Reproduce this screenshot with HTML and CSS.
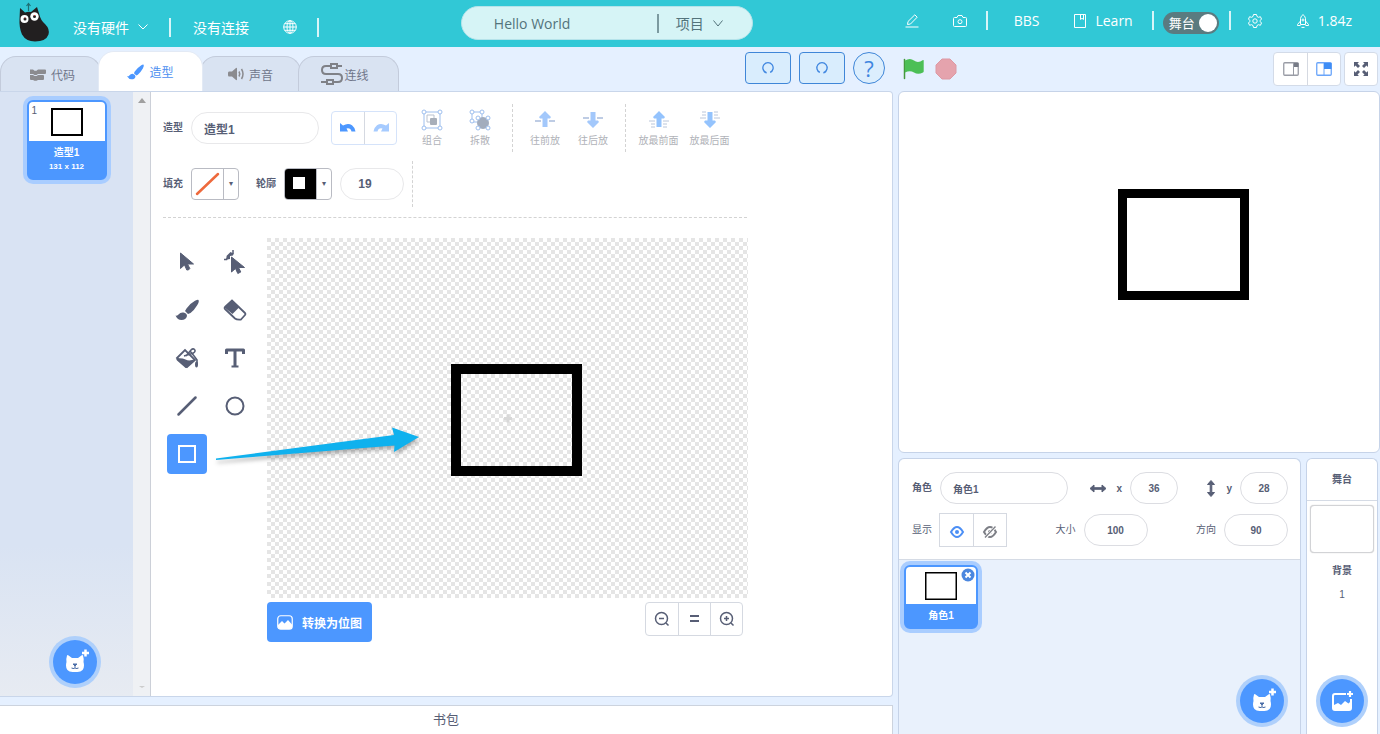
FILE: index.html
```html
<!DOCTYPE html>
<html lang="zh-CN">
<head>
<meta charset="utf-8">
<meta name="viewport" content="width=device-width, initial-scale=1">
<title>Hello World</title>
<link rel="stylesheet" href="styles.css">
</head>
<body>
<header class="topbar">
  <div class="topbar-left">
    <svg class="logo" width="32" height="40" viewBox="0 0 32 40" aria-label="Kitten">
      <path d="M10.500 9V2M8.500 4l2-2.500 2 2.500" stroke="#1d6f74" stroke-width="1.200" fill="none"/>
      <path d="M2 6l5 4.500q3-1 6-.5l6-5 2.500 8q1 5 5.500 9 5 5 3.500 10.500-2.500 7-13.500 7-9 0-13-7-3-7-2.500-15z" fill="#221f20"/>
      <circle cx="6.500" cy="17" r="4" fill="#fff"/><circle cx="16.500" cy="14.500" r="4.200" fill="#fff"/>
      <circle cx="7" cy="17" r="1.500" fill="#222"/><circle cx="16.500" cy="14.500" r="1.500" fill="#222"/>
      <path d="M6.500 16h1M16 13.500h1" stroke="#c33" stroke-width="1"/>
    </svg>
    <button class="top-btn hardware">没有硬件
      <svg width="10" height="6" viewBox="0 0 10 6"><path d="M.5.500L5 5 9.500.500" fill="none" stroke="currentColor"/></svg>
    </button>
    <span class="bar"></span>
    <button class="top-btn connection">没有连接</button>
    <button class="top-btn globe" aria-label="语言">
      <svg width="14" height="14" viewBox="0 0 14 14" fill="none" stroke="currentColor"><circle cx="7" cy="7" r="6.300"/><ellipse cx="7" cy="7" rx="3" ry="6.300"/><path d="M7 .700v12.600M.7 7h12.600M1.700 3.700h10.600M1.700 10.300h10.600"/></svg>
    </button>
    <span class="bar"></span>
  </div>
  <div class="project">
    <input class="project-name" value="Hello World" aria-label="项目名称">
    <span class="project-bar"></span>
    <button class="project-menu">项目
      <svg width="10" height="7" viewBox="0 0 10 7"><path d="M.5.500L5 6 9.500.500" fill="none" stroke="currentColor"/></svg>
    </button>
  </div>
  <div class="topbar-right">
    <button class="top-btn edit" aria-label="编辑">
      <svg width="14" height="14" viewBox="0 0 14 14" fill="none" stroke="currentColor"><path d="M.5 13h13M2.500 10.500l.5-3L9.800.800l2.400 2.400L5.500 10z"/></svg>
    </button>
    <button class="top-btn camera" aria-label="截图">
      <svg width="14" height="12" viewBox="0 0 14 12" fill="none" stroke="currentColor"><path d="M1.500 2.500H4L5 .5h4l1 2h2.500q1 0 1 1v7q0 1-1 1h-11q-1 0-1-1v-7q0-1 1-1z"/><circle cx="7" cy="6.700" r="2"/></svg>
    </button>
    <span class="bar"></span>
    <a class="top-link bbs" href="#">BBS</a>
    <a class="top-link learn" href="#">
      <svg width="12" height="14" viewBox="0 0 12 14" fill="none" stroke="currentColor"><path d="M.5.500h11v13H.5zM6.500.500v5l1.500-1.200 1.500 1.200v-5"/></svg>
      Learn</a>
    <span class="bar"></span>
    <label class="stage-switch">舞台<input type="checkbox" role="switch" checked></label>
    <span class="bar"></span>
    <button class="top-btn gear" aria-label="设置">
      <svg width="14" height="14" viewBox="0 0 14 14" fill="none" stroke="currentColor"><path d="M5.500.500h3l.5 2 1.500.800 1.900-.6 1.100 2.300-1.300 1.500v1l1.300 1.500-1.100 2.300-1.900-.6-1.500.800-.5 2h-3l-.5-2-1.500-.8-1.900.6L.5 9l1.300-1.500v-1L.5 5l1.100-2.300 1.900.6L5 2.500z"/><circle cx="7" cy="7" r="2.200"/></svg>
    </button>
    <a class="top-link version" href="#">
      <svg width="12" height="14" viewBox="0 0 12 14" fill="none" stroke="currentColor"><path d="M3.500 10.500V4.500Q4 1.800 6 .6q2 1.200 2.500 3.900v6zM3.500 7l-3 3.500v1h3M8.500 7l3 3.500v1h-3M4.500 13.400h3"/><circle cx="6" cy="6" r="1"/></svg>
      1.84z</a>
  </div>
</header>

<main class="layout">
  <section class="left">
    <div class="tabs-row">
      <div class="tabs" role="tablist">
        <button class="tab" role="tab">
          <svg width="16" height="13" viewBox="0 0 16 13" fill="#8b8b8f"><path d="M0 1.500h3l1.500 1.200h2L8 1.500h7q1 0 1 1v2.500q0 1-1 1H8L6.500 7h-2L3 6H0zM0 7h3l1.500 1h2L8 7h5q1 0 1 1v3q0 1-1 1H8l-1.500.800h-2L3 12H1q-1 0-1-1z"/></svg>代码</button>
        <button class="tab tab-active" role="tab" aria-selected="true">
          <svg width="17" height="16" viewBox="0 0 22 20" fill="#4c97ff"><path d="M21.500.500q1 1-1 5Q18 10 14 13.500l-2 1-3-3 1-2Q14 4 18.500 1.200q2-1.200 3-.7zM8 12.500q3 1 3 3.500-1 3.500-5 3.500-3.500 0-6-4 2 .5 3-1 2-2.500 5-2z"/></svg>造型</button>
        <button class="tab" role="tab">
          <svg width="16" height="14" viewBox="0 0 16 14" fill="#8b8b8f"><path d="M1 4.500h3L8 1q1-.5 1 .7v10.600q0 1.200-1 .7L4 9.500H1Q0 9.500 0 8V6q0-1.500 1-1.500z"/><path d="M11 4.500q1.500 2.500 0 5M13.500 2q3 5 0 10" fill="none" stroke="#8b8b8f" stroke-width="1.500"/></svg>声音</button>
        <button class="tab tab-wire" role="tab">
          <svg width="24" height="22" viewBox="0 0 24 22" fill="none" stroke="#7f8187" stroke-width="2"><path d="M17 3h5M11 3H6q-4 0-4 4t4 4h12q4 0 4 4t-4 4h-5M7 19H1"/><rect x="11" y="1" width="6" height="4"/><rect x="7" y="17" width="6" height="4"/></svg>连线</button>
      </div>
      <div class="history">
        <button class="pill-btn" aria-label="撤销"><svg width="12" height="12" viewBox="0 0 14 14"><path d="M4.500 12.200a6 6 0 1 1 5 0" fill="none" stroke="currentColor" stroke-width="1.500"/><path d="M2 12.500l3.500-1v2z" fill="currentColor"/></svg></button>
        <button class="pill-btn" aria-label="重做"><svg width="12" height="12" viewBox="0 0 14 14"><path d="M4.500 12.200a6 6 0 1 1 5 0" fill="none" stroke="currentColor" stroke-width="1.500"/><path d="M12 12.500l-3.500-1v2z" fill="currentColor"/></svg></button>
        <button class="help-btn" aria-label="帮助">?</button>
      </div>
    </div>

    <div class="editor">
      <aside class="costumes">
        <div class="costume-list">
          <button class="thumb costume">
            <span class="costume-no">1</span>
            <span class="thumb-view"><svg width="32" height="28" viewBox="0 0 32 28"><rect x="1" y="1" width="30" height="26" fill="#fff" stroke="#000" stroke-width="2"/></svg></span>
            <span class="thumb-name">造型1</span>
            <span class="thumb-size">131 x 112</span>
          </button>
          <button class="round-btn" aria-label="添加造型">
            <svg width="24" height="24" viewBox="0 0 24 24"><use href="#cat-plus"/></svg>
          </button>
        </div>
        <div class="scrollbar"><svg width="8" height="5" viewBox="0 0 8 5"><path d="M0 5l4-5 4 5z" fill="#a0a0a0"/></svg><svg width="6" height="2" viewBox="0 0 6 2"><path d="M0 0h6L3 2z" fill="#ccc"/></svg></div>
      </aside>

      <div class="paint">
        <div class="paint-head">
          <div class="paint-row">
            <label class="lbl" for="costume-name">造型</label>
            <input class="field field-name" id="costume-name" value="造型1">
            <div class="undo-group">
              <button aria-label="撤销"><svg width="16" height="10" viewBox="0 0 16 10"><path d="M0 0l3 2.500Q8-.5 12 2.200 15 4.500 15.500 8.500h-4Q10.500 4.500 6.500 5.500L8 8.500H0z" fill="#4c97ff"/></svg></button>
              <button aria-label="重做"><svg width="16" height="10" viewBox="0 0 16 10"><path d="M16 0l-3 2.500Q8-.5 4 2.200 1 4.500.5 8.500h4Q5.500 4.500 9.500 5.500L8 8.500h8z" fill="#a6cbff"/></svg></button>
            </div>
            <div class="actions">
              <button class="action"><svg width="22" height="22" viewBox="0 0 22 22"><path d="M3 3h16v16H3z" fill="none" stroke="#9ebfee"/><path d="M6 6h7v7H6z" fill="#fff" stroke="#b9c2d0"/><rect x="9" y="9" width="7" height="7" rx="1" fill="#a8afba"/><g fill="#fff" stroke="#9ebfee"><circle cx="3" cy="3" r="2"/><circle cx="19" cy="3" r="2"/><circle cx="3" cy="19" r="2"/><circle cx="19" cy="19" r="2"/></g></svg>组合</button>
              <button class="action"><svg width="22" height="22" viewBox="0 0 22 22"><path d="M3 3h10v10H3z" fill="none" stroke="#9ebfee"/><circle cx="14" cy="14" r="6" fill="#a3adbd"/><g fill="#fff" stroke="#9ebfee"><circle cx="3" cy="3" r="2"/><circle cx="13" cy="3" r="2"/><circle cx="3" cy="12" r="2"/><circle cx="9" cy="9" r="2"/><circle cx="19" cy="9" r="2"/><circle cx="9" cy="19" r="2"/><circle cx="19" cy="19" r="2"/></g></svg>拆散</button>
            </div>
            <div class="actions">
              <button class="action"><svg width="22" height="22" viewBox="0 0 22 22"><path d="M1 12h6M15 12h6" stroke="#a9bcdc" stroke-width="1.500"/><path d="M11 2l6 6-1 1.500h-2.500V18h-5V9.500H6L5 8z" fill="#a3c8fb"/></svg>往前放</button>
              <button class="action"><svg width="22" height="22" viewBox="0 0 22 22"><path d="M1 9h6M15 9h6" stroke="#a9bcdc" stroke-width="1.500"/><path d="M11 19l6-6-1-1.500h-2.500V3h-5v8.500H6L5 13z" fill="#a3c8fb"/></svg>往后放</button>
            </div>
            <div class="actions actions-last">
              <button class="action"><svg width="22" height="22" viewBox="0 0 22 22"><path d="M1 12h6M15 12h6M3 15h4M15 15h4M3 18h4M15 18h4" stroke="#bac6da"/><path d="M11 2l6 6-1 1.500h-2.500V18h-5V9.500H6L5 8z" fill="#94c3fd"/></svg>放最前面</button>
              <button class="action"><svg width="22" height="22" viewBox="0 0 22 22"><path d="M1 9h6M15 9h6M3 6h4M15 6h4M3 3h4M15 3h4" stroke="#bac6da"/><path d="M11 19l6-6-1-1.500h-2.500V3h-5v8.500H6L5 13z" fill="#94c3fd"/></svg>放最后面</button>
            </div>
          </div>
          <div class="paint-row paint-row-2">
            <span class="lbl">填充</span>
            <button class="swatch" aria-label="填充"><svg width="31" height="30" viewBox="0 0 31 30"><path d="M5 25L26 5" stroke="#ee6a3d" stroke-width="2.500" stroke-linecap="round"/></svg><span class="caret">▾</span></button>
            <span class="lbl lbl-outline">轮廓</span>
            <button class="swatch" aria-label="轮廓"><svg width="31" height="30" viewBox="0 0 31 30"><path d="M-1-1h32v32H-1z"/><path d="M8 8h12v12H8z" fill="#fff"/></svg><span class="caret">▾</span></button>
            <input class="field field-width" value="19" aria-label="轮廓宽度">
            <span class="dash"></span>
          </div>
        </div>
        <div class="paint-body">
          <div class="tools">
            <button class="tool" aria-label="选择"><svg width="24" height="24" viewBox="0 0 24 24"><use href="#pointer"/></svg></button>
            <button class="tool" aria-label="变形"><svg width="24" height="24" viewBox="0 0 24 24"><path d="M8.500 7v15l4-3.500 2.300 5 3-1.500-2.300-4.500h6z" fill="#575e75" stroke="#575e75" stroke-linejoin="round"/><path d="M1 9.500h2.500q1-5 6.500-6V0" fill="none" stroke="#575e75" stroke-width="1.500"/><path d="M3.500 6l4-4 3 1.500-.5 2-3 .5v3l-3 .5z" fill="#575e75"/></svg></button>
            <button class="tool" aria-label="画笔"><svg width="24" height="24" viewBox="0 0 24 24" fill="#575e75"><path d="M23.500 2q1 1.500-1.500 5.500-3 5-6.500 7.500l-2.500 1-3-3 1.500-2.500Q15 5.500 20 2.800q3-1.500 3.500-.8zM8.500 14.500q3.500.800 3.500 3.500-1 4-5.500 4-4 0-6-4.500 2 .5 3-1 2-2.500 5-2z"/></svg></button>
            <button class="tool" aria-label="橡皮擦"><svg width="24" height="24" viewBox="0 0 24 24"><path d="M2 9l7-6.500L22 15q1 1 0 2l-4 4.500q-4 .500-6-1L2 11q-1-1 0-2z" fill="#fff" stroke="#575e75" stroke-width="1.800"/><path d="M1.500 9.500L9 2l7.500 7-7 7z" fill="#575e75"/></svg></button>
            <button class="tool" aria-label="填充"><svg width="24" height="24" viewBox="0 0 24 24"><path d="M2 12l8-8 10 10-8 7z" fill="none" stroke="#575e75" stroke-width="1.800"/><path d="M1.500 12.500q5-1 9 1t9.500-.5l-8 8.500q-1 1-2 0l-8-7q-1-1-.5-2z" fill="#575e75"/><path d="M11 10l5-6q2-2 3.500-.5t-1 3.500L9 10M15 5q5 6 7 9v5.500" fill="none" stroke="#575e75" stroke-width="1.600"/><ellipse cx="21.500" cy="18.500" rx="1.500" ry="3" fill="#575e75"/></svg></button>
            <button class="tool" aria-label="文本"><svg width="24" height="24" viewBox="0 0 24 24" fill="none" stroke="#575e75" stroke-width="3"><path d="M3.500 8V4h17v4M12 4v17" stroke-linejoin="round"/><path d="M8.500 20.500h7" stroke-width="2"/></svg></button>
            <button class="tool" aria-label="线段"><svg width="24" height="24" viewBox="0 0 24 24"><path d="M3.500 20.500L20.500 3.500" stroke="#575e75" stroke-width="2.500" stroke-linecap="round"/></svg></button>
            <button class="tool" aria-label="圆"><svg width="24" height="24" viewBox="0 0 24 24"><circle cx="12" cy="12" r="8.500" fill="none" stroke="#575e75" stroke-width="2"/></svg></button>
            <button class="tool tool-active" aria-label="矩形"><svg width="24" height="24" viewBox="0 0 24 24"><rect x="4" y="4" width="16" height="16" fill="none" stroke="#fff" stroke-width="2"/></svg></button>
          </div>
          <div class="canvas-col">
            <svg class="canvas" width="481" height="360" viewBox="0 0 481 360">
              <defs><pattern id="checks" width="8" height="8" patternUnits="userSpaceOnUse"><path d="M0 0h8v8H0z" fill="#fff"/><path d="M0 0h4v4H0zM4 4h4v4H4z" fill="#e5e5e5"/></pattern></defs>
              <path d="M0 0h481v360H0z" fill="url(#checks)"/>
              <path d="M237 180.500h8M241 176.500v8" stroke="#d8d8d8" stroke-width="3"/>
              <rect x="189" y="131" width="121" height="102" fill="none" stroke="#000" stroke-width="10"/>
            </svg>
            <div class="canvas-foot">
              <button class="convert"><svg width="16" height="15" viewBox="0 0 16 15"><rect x=".75" y=".75" width="14.500" height="13.500" rx="3" fill="none" stroke="#fff" stroke-width="1.200"/><path d="M1 10l4-4 2.500 2.500L11 5l4 4.500V12q0 2-2 2H3q-2 0-2-2z" fill="#fff"/></svg>转换为位图</button>
              <div class="zoom">
                <button aria-label="缩小"><svg width="16" height="16" viewBox="0 0 16 16" fill="none" stroke="#575e75" stroke-width="1.500"><circle cx="7.500" cy="7.500" r="6"/><path d="M12 12l2.500 2.500M5 7.500h5"/></svg></button>
                <button aria-label="还原"><svg width="16" height="16" viewBox="0 0 16 16" fill="none" stroke="#575e75" stroke-width="2"><path d="M3 5h9M3 10h9"/></svg></button>
                <button aria-label="放大"><svg width="16" height="16" viewBox="0 0 16 16" fill="none" stroke="#575e75" stroke-width="1.500"><circle cx="7.500" cy="7.500" r="6"/><path d="M12 12l2.500 2.500M5 7.500h5M7.500 5v5"/></svg></button>
              </div>
            </div>
          </div>
          <svg class="arrow" width="212" height="42" viewBox="0 0 212 42"><path d="M-1 32.500L177 9l-2-7.500 27 9.500-25 15 .5-6.500L-1 34z" fill="#0fb1ee"/></svg>
        </div>
      </div>
    </div>
    <button class="backpack">书包</button>
  </section>

  <section class="right">
    <div class="stage-bar">
      <button class="plain" aria-label="运行"><svg width="22" height="22" viewBox="0 0 22 22"><path d="M1.500 1.500v19" stroke="#45993d" stroke-width="1.500" stroke-linecap="round"/><path d="M2 2.500q5-3 9 0t9-.5q.7-.3.700.5v11q0 .700-.7 1-5 2.500-9 0t-9 0z" fill="#4cbf56"/></svg></button>
      <button class="plain" aria-label="停止"><svg width="22" height="22" viewBox="0 0 22 22"><path d="M7 1h8l6 6v8l-6 6H7l-6-6V7z" fill="#e5a3ad" stroke="#dd99a4"/></svg></button>
      <div class="size-group">
        <button aria-label="小舞台"><svg width="16" height="14" viewBox="0 0 16 14"><rect x=".75" y=".75" width="14.500" height="12.500" rx="1" fill="#fff" stroke="#999ca5" stroke-width="1.300"/><path d="M10.500 1v12" stroke="#999ca5"/><path d="M11 1h4.500v4H11z" fill="#777b86"/></svg></button>
        <button aria-label="大舞台"><svg width="16" height="14" viewBox="0 0 16 14"><rect x=".75" y=".75" width="14.500" height="12.500" rx="1" fill="#fff" stroke="#6aa5fa" stroke-width="1.300"/><path d="M8 1v12" stroke="#6aa5fa"/><path d="M8 1h7.500v6H8z" fill="#3f8df5"/></svg></button>
      </div>
      <div class="size-group size-full">
        <button aria-label="全屏"><svg width="16" height="16" viewBox="0 0 16 16" fill="#575e75"><path d="M1 1h5L4.500 2.500l2.500 2.500-2 2-2.500-2.500L1 6zM15 1h-5l1.500 1.500L9 5l2 2 2.500-2.500L15 6zM1 15h5l-1.500-1.500L7 11 5 9l-2.500 2.500L1 10zM15 15h-5l1.500-1.500L9 11l2-2 2.500 2.500L15 10z"/></svg></button>
      </div>
    </div>
    <svg class="stage" viewBox="0 0 480 360"><rect x="223.500" y="101.500" width="122" height="102" fill="#fff" stroke="#000" stroke-width="9"/></svg>
    <div class="targets">
      <div class="sprites">
        <div class="sprite-info">
          <div class="info-row">
            <label class="lbl" for="sprite-name">角色</label>
            <input class="field field-sprite" id="sprite-name" value="角色1">
            <label class="axis" for="pos-x"><svg width="18" height="12" viewBox="0 0 18 12"><path d="M1 6.500l4-3.500v2.700h8V3l4 3.500-4 3.500V7.300H5V10z" fill="#575e75" stroke="#575e75" stroke-linejoin="round"/></svg>x</label>
            <input class="field field-num" id="pos-x" value="36">
            <label class="axis" for="pos-y"><svg width="12" height="18" viewBox="0 0 12 18"><path d="M6 1.500l3.500 4H6.800v8h2.700l-3.500 4-3.500-4h2.700v-8H2.500z" fill="#575e75" stroke="#575e75" stroke-linejoin="round"/></svg>y</label>
            <input class="field field-num" id="pos-y" value="28">
          </div>
          <div class="info-row">
            <span class="lbl light">显示</span>
            <div class="eye-group">
              <button aria-label="显示"><svg width="14" height="12" viewBox="0 0 14 12"><path d="M1 6q6-10 12 0-6 10-12 0z" fill="#fff" stroke="#4c8ff5" stroke-width="2"/><circle cx="7" cy="6" r="2" fill="#4c8ff5"/></svg></button>
              <button aria-label="隐藏"><svg width="14" height="12" viewBox="0 0 14 12"><path d="M1 6q6-10 12 0-6 10-12 0z" fill="#fff" stroke="#7d7f86" stroke-width="2"/><circle cx="7" cy="6" r="2" fill="#7d7f86"/><path d="M2 12L13 0" stroke="#fff" stroke-width="3"/><path d="M2 11.500L12.500.500" stroke="#7d7f86" stroke-width="1.300"/></svg></button>
            </div>
            <label class="lbl light push" for="size">大小</label>
            <input class="field field-mid" id="size" value="100">
            <label class="lbl light push" for="dir">方向</label>
            <input class="field field-mid" id="dir" value="90">
          </div>
        </div>
        <div class="sprite-list">
          <button class="thumb sprite">
            <span class="thumb-view"><svg width="32" height="28" viewBox="0 0 32 28"><rect x=".75" y=".75" width="30.500" height="26.500" fill="#fff" stroke="#000" stroke-width="1.500"/></svg></span>
            <span class="thumb-name">角色1</span>
            <svg class="delete" width="14" height="14" viewBox="0 0 14 14"><circle cx="7" cy="7" r="6.500" fill="#4b87df"/><path d="M4.500 4.500l5 5M9.500 4.500l-5 5" stroke="#fff" stroke-width="2"/></svg>
          </button>
          <button class="round-btn" aria-label="添加角色"><svg width="24" height="24" viewBox="0 0 24 24"><use href="#cat-plus"/></svg></button>
        </div>
      </div>
      <div class="backdrop">
        <div class="backdrop-title">舞台</div>
        <button class="backdrop-view" aria-label="舞台背景"></button>
        <span class="backdrop-label">背景</span>
        <span class="backdrop-count">1</span>
        <button class="round-btn" aria-label="添加背景"><svg width="24" height="24" viewBox="0 0 24 24"><path d="M16 4H5Q2 4 2 7v12q0 3 3 3h14q3 0 3-3V10h-2v3l-1.500 1.500L15 12l-4 4-3-2-4 2V7q0-1 1-1h11z" fill="#fff"/><path d="M20 2v6M17 5h6" stroke="#fff" stroke-width="2.200"/></svg></button>
      </div>
    </div>
  </section>
</main>

<svg class="defs" width="0" height="0" aria-hidden="true">
  <defs>
    <g id="pointer"><path d="M5.500 3v15.500l4-3.600 2.300 5.100q2 .500 3-1.500l-2.300-4.500h6z" fill="#575e75" stroke="#575e75" stroke-linejoin="round"/></g>
    <g id="cat-plus"><path d="M4 5.500q.5-.7 1.200-.2L9 8h6l3.800-2.700q.7-.5 1.200.2 1 3 .5 6.500.500 1.500.5 3.500 0 6.500-6.500 6.500h-5Q3 22 3 15.500q0-2 .5-3.500Q3 8.500 4 5.500z" fill="#fff"/><path d="M10 14h4l-2 2zM12 16v1.500M8.500 18q3.500 1.500 3.500-.5 0 2 3.500.5" fill="#4c6fa8" stroke="#4c6fa8" stroke-linejoin="round"/><path d="M22.500-.5v7M19 3h7" stroke="#fff" stroke-width="2.500"/></g>
  </defs>
</svg>
</body>
</html>
```
FILE: styles.css
```css
* { box-sizing: border-box; }
body {
  margin: 0;
  height: 100vh;
  display: flex;
  flex-direction: column;
  overflow: hidden;
  background: #e5f0ff;
  color: #575e75;
  font-family: "Liberation Sans", "Noto Sans CJK SC", sans-serif;
  font-size: 10px;
}
button, input { font: inherit; color: inherit; }
button {
  display: flex;
  align-items: center;
  justify-content: center;
  padding: 0;
  border: 0;
  background: none;
}
svg { flex: none; overflow: visible; }
.defs { position: absolute; }

/* Top bar */
.topbar {
  flex: none;
  height: 47px;
  display: flex;
  justify-content: space-between;
  align-items: flex-start;
  padding: 0 28px 0 18px;
  background: #31c8d6;
  color: #fff;
  font-family: "Open Sans", "Noto Sans CJK SC", sans-serif;
  font-size: 14px;
}
.topbar-left, .topbar-right { display: flex; align-items: center; }
.topbar-left { height: 46px; padding-top: 8px; }
.topbar-right { height: 41px; }
.logo { margin: -11px 23px 0 0; }
.bar { width: 2px; height: 19px; background: #d8f5f8; }
.top-btn { font-size: 14px; gap: 9px; }
.hardware { margin-right: 21px; }
.connection { margin: 0 34px 0 22px; }
.globe { margin-right: 20px; }
.project {
  flex: 0 1 291px;
  height: 34px;
  margin: 6px 10px 0 0;
  padding-left: 32px;
  display: flex;
  align-items: center;
  border-radius: 17px;
  border: 1px solid #b5e3ea;
  background: #d6f4f6;
  color: #53737b;
}
.project-name { flex: 1; min-width: 0; border: 0; padding: 0; background: none; }
.project-bar { width: 2px; height: 19px; background: #7c9aa0; }
.project-menu { margin: 0 29px 0 17px; gap: 9px; }
.camera { margin: 0 19px 0 34px; }
.top-link { display: flex; align-items: center; gap: 9px; color: #fff; text-decoration: none; }
.bbs { margin: 0 35px 0 26px; }
.learn { margin-right: 19px; }
.stage-switch {
  display: flex;
  align-items: center;
  justify-content: space-between;
  width: 56px;
  height: 22px;
  margin: 4px 10px 0 9px;
  padding: 0 2px 0 6px;
  border-radius: 11px;
  background: #5a7b80;
  font-size: 13px;
}
.stage-switch input { appearance: none; margin: 0; width: 18px; height: 18px; border-radius: 50%; background: #fff; }
.gear { margin: 0 35px 0 17px; }

/* Columns */
.layout { flex: 1; min-height: 0; display: flex; gap: 5px; }
.left { flex: 1; min-width: 0; display: flex; flex-direction: column; }
.right { flex: none; width: 482px; display: flex; flex-direction: column; }

/* Tabs */
.tabs-row { flex: none; height: 44px; display: flex; justify-content: space-between; align-items: flex-end; }
.tabs { display: flex; align-items: flex-end; }
.tab {
  width: 101px;
  height: 35px;
  margin-right: -3px;
  gap: 5px;
  border: 1px solid #c3cbdb;
  border-bottom: 0;
  border-radius: 16px 16px 0 0;
  background: #d9e3f2;
  color: #70768a;
  font-size: 12px;
}
.tab:first-child { padding-left: 4px; }
.tab-active { position: relative; width: 105px; height: 40px; background: #fff; color: #4c8ff0; border-color: #e3eaf5; }
.tab-wire { gap: 0; padding-right: 8px; }
.history { display: flex; gap: 8px; padding: 0 8px 7px 0; color: #3f86e0; }
.pill-btn { width: 46px; height: 32px; border: 1px solid #3f86d8; border-radius: 4px; background: #d9edfd; }
.help-btn { width: 32px; height: 32px; border: 1px solid #3f86d8; border-radius: 50%; background: #dceefd; font: 22px "Open Sans", sans-serif; }

/* Editor */
.editor {
  flex: 1;
  min-height: 0;
  display: flex;
  border: 1px solid #c9d6ea;
  border-left: 0;
  border-radius: 0 4px 4px 0;
  background: #fff;
}
.costumes { flex: none; width: 151px; display: flex; border-right: 1px solid #ccd0d8; background: #eff1f4; }
.costume-list {
  width: 133px;
  padding: 8px 0;
  display: flex;
  flex-direction: column;
  align-items: center;
  justify-content: space-between;
  background: linear-gradient(#d9e3f3 75%, #e7ebf2);
}
.costume-list .round-btn { margin-left: 20px; }
.scrollbar { width: 17px; padding: 6px 0 8px; display: flex; flex-direction: column; align-items: center; justify-content: space-between; }
.thumb {
  position: relative;
  flex-direction: column;
  justify-content: flex-start;
  overflow: visible;
  border: 2px solid #4c97ff;
  border-radius: 6px;
  background: #4c97ff;
  box-shadow: 0 0 0 4px #a9cdff;
  color: #fff;
  font-weight: bold;
}
.costume { width: 80px; height: 80px; }
.thumb-view { width: 100%; height: 39px; display: flex; align-items: center; justify-content: center; background: #fff; border-radius: 4px 4px 0 0; }
.thumb-name { line-height: 14px; margin-top: 5px; font-size: 10px; }
.thumb-size { line-height: 14px; font-size: 8px; }
.costume-no { position: absolute; top: 3px; left: 3px; color: #575e75; font-weight: normal; }
.round-btn { flex: none; width: 44px; height: 44px; margin: 4px; border-radius: 50%; background: #4c97ff; box-shadow: 0 0 0 4px #afd0fb; }

.paint { flex: 1; min-width: 0; padding: 12px 12px 0; }
.paint-head { width: 584px; height: 114px; border-bottom: 1px dashed #d3d3d3; }
.paint-row { height: 48px; display: flex; align-items: center; }
.paint-row > * { flex: none; }
.paint-row-2 { margin-top: 8px; }
.lbl { width: 28px; font-weight: bold; line-height: 16px; white-space: nowrap; }
.light { font-weight: normal; }
.lbl-outline { margin-left: 17px; }
.field {
  height: 32px;
  min-width: 0;
  padding: 0;
  border: 1px solid #dcdde2;
  border-radius: 16px;
  background: #fff;
  font-weight: bold;
  text-align: center;
}
.paint .field { font-size: 12px; border-color: #e8e8ea; }
.field-name { width: 128px; margin-right: 12px; }
.paint .field-name, .field-sprite { padding-left: 12px; text-align: left; }
.undo-group, .size-group, .eye-group, .zoom { display: flex; border: 1px solid #d5d9e1; border-radius: 4px; background: #fff; }
.undo-group button, .size-group button, .eye-group button, .zoom button { width: 33px; height: 32px; }
.undo-group button + button, .size-group button + button, .eye-group button + button, .zoom button + button { border-left: 1px solid #d5d9e1; }
.undo-group { border-color: #d5e3fa; margin-right: 3px; }
.undo-group button { width: 32px; }
.actions { height: 48px; padding: 0 8px; display: flex; align-items: center; border-right: 1px dashed #d3d3d3; }
.actions-last { border: 0; padding: 0 7px; }
.action { flex-direction: column; width: 48px; gap: 3px; color: #b0b2b8; line-height: 14px; white-space: nowrap; }
.actions-last .action { width: 51px; }
.swatch { width: 48px; height: 32px; overflow: hidden; border: 1px solid #b9bbc3; border-radius: 4px; }
.caret { flex: 1; align-self: stretch; line-height: 30px; border-left: 1px solid #b9bbc3; font-family: "DejaVu Sans", sans-serif; font-size: 8px; }
.field-width { width: 64px; margin: 0 8px; padding-right: 14px; }
.dash { height: 46px; border-left: 1px dashed #d3d3d3; }

.paint-body { position: relative; display: flex; gap: 12px; padding: 20px 0 0 4px; }
.tools { display: grid; grid-template-columns: 40px 40px; gap: 8px; align-content: start; padding-top: 4px; }
.tool { width: 40px; height: 40px; border-radius: 4px; }
.tool-active { background: #4c97ff; }
.canvas { display: block; }
.canvas-foot { display: flex; justify-content: space-between; align-items: flex-start; padding: 4px 5px 0 0; }
.convert { width: 105px; height: 40px; gap: 9px; border-radius: 4px; background: #4c97ff; color: #fff; font-size: 12px; font-weight: bold; white-space: nowrap; }
.zoom button { width: 32px; }
.arrow { position: absolute; left: 54px; top: 208px; filter: drop-shadow(1px 3px 2px rgba(0, 0, 0, .3)); }

.backpack {
  flex: none;
  height: 29px;
  margin-top: 8px;
  padding-bottom: 4px;
  border: 1px solid #ccd3de;
  border-width: 1px 1px 0 0;
  background: #fff;
  font-size: 13px;
}

/* Stage */
.stage-bar { flex: none; height: 44px; display: flex; align-items: center; padding: 0 2px 0 5px; }
.plain { margin-right: 10px; }
.size-group { margin-left: auto; border-color: #d3dbe8; }
.size-full { margin-left: 3px; }
.size-full button { width: 32px; }
.stage { flex: none; display: block; width: 100%; height: auto; border: 1px solid #c6d3e8; border-radius: 6px; background: #fff; }
.targets { flex: 1; min-height: 0; margin-top: 5px; display: flex; gap: 5px; padding-right: 2px; }
.sprites { flex: 1; min-width: 0; display: flex; flex-direction: column; border: 1px solid #c6d3e8; border-bottom: 0; border-radius: 6px 6px 0 0; background: #e9f1fc; }
.sprite-info { display: flex; flex-direction: column; gap: 8px; height: 101px; padding: 12px 12px 0 13px; border-bottom: 1px solid #d5dbe5; border-radius: 6px 6px 0 0; background: #fff; }
.info-row { height: 34px; display: flex; align-items: center; }
.field-sprite { width: 128px; }
.field-num { width: 48px; }
.field-mid { width: 64px; }
.axis { flex: 1; display: flex; align-items: center; justify-content: flex-end; gap: 9px; padding-right: 8px; font-weight: bold; }
.eye-group { border-radius: 0; margin-left: -1px; }
.eye-group button { padding-top: 4px; }
.push { margin-left: auto; }
.sprite-list { flex: 1; display: flex; justify-content: space-between; align-items: flex-start; padding: 5px 12px 2px 5px; }
.sprite { width: 74px; height: 64px; }
.sprite .thumb-view { height: 37px; }
.sprite-list .round-btn { align-self: flex-end; margin-bottom: 9px; }
.delete { position: absolute; top: 1px; right: 1px; }
.backdrop { width: 72px; display: flex; flex-direction: column; align-items: center; border: 1px solid #c6d3e8; border-bottom: 0; border-radius: 6px 6px 0 0; background: #fff; }
.backdrop-title { width: 100%; height: 42px; line-height: 41px; text-align: center; font-weight: bold; border-bottom: 1px solid #d5dbe5; }
.backdrop-view { width: 64px; height: 48px; margin: 4px 0 10px; border: 1px solid #d2d3d6; border-radius: 4px; background: #fff; box-shadow: 0 0 1px #bbb; }
.backdrop-label { line-height: 16px; font-weight: bold; }
.backdrop-count { line-height: 16px; margin-top: 8px; }
.backdrop .round-btn { margin: auto 0 11px; }
```
